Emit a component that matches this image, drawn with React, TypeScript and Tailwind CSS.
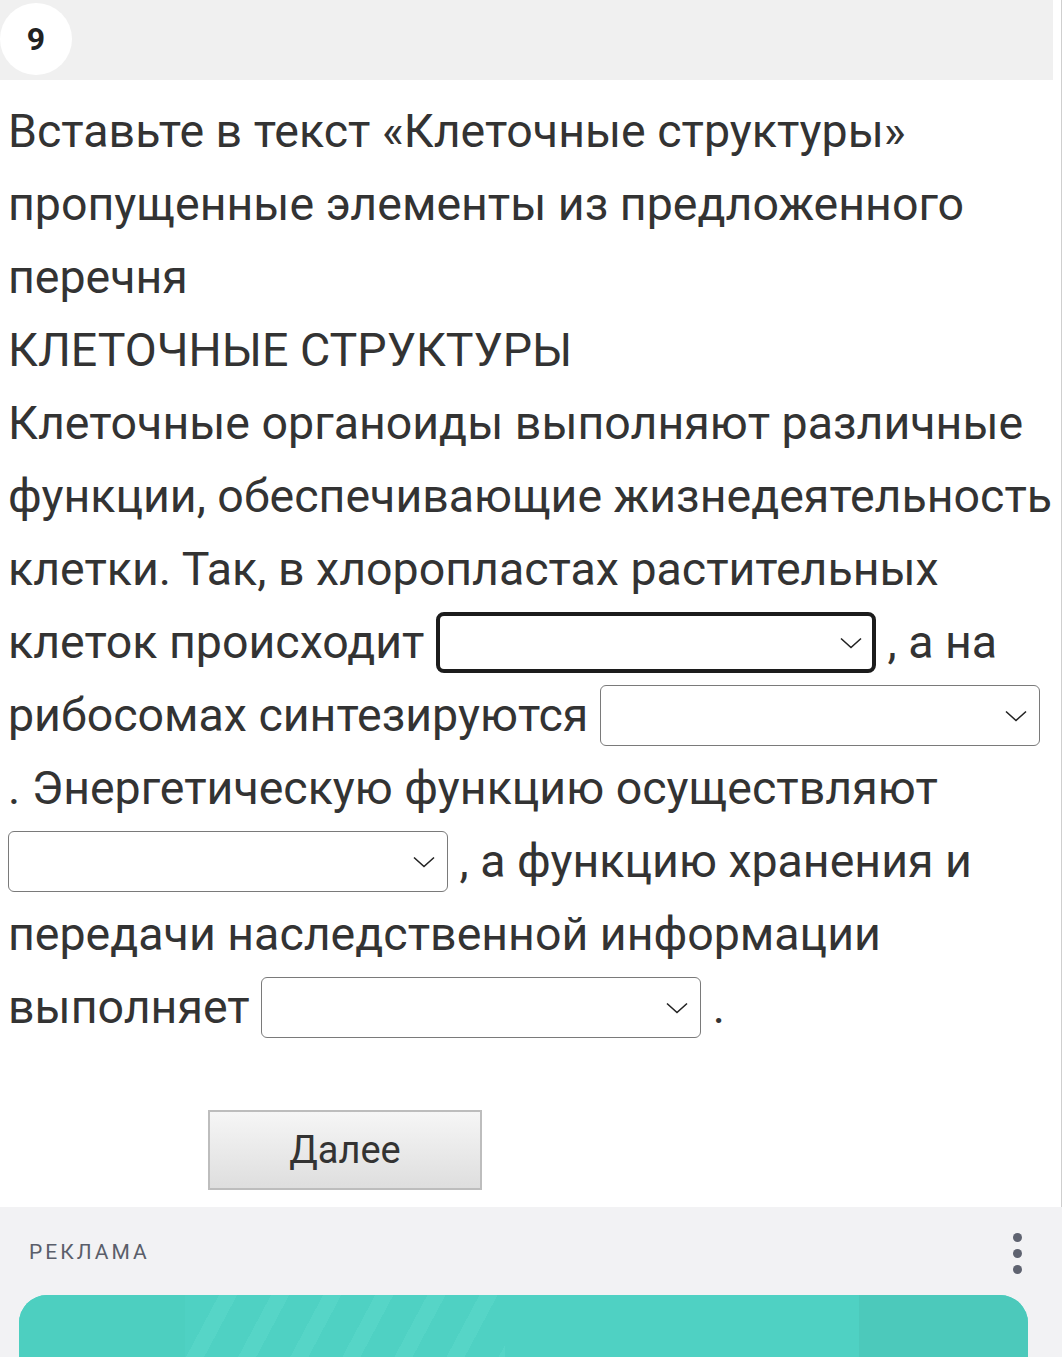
import React from 'react'

// Inline dropdown placeholder used inside the question text
function Blank({ focused = false }: { focused?: boolean }) {
  return (
    <span
      className={`inline-flex items-center justify-end w-[440px] h-[61px] bg-white align-middle ${
        focused ? 'border-[4px] border-[#1c1c1c] rounded-[8px] pr-[10px]' : 'border-[1.5px] border-[#7a7a7a] rounded-[6px] pr-[12px]'
      }`}
    >
      <svg width="22" height="12" viewBox="0 0 22 12" fill="none">
        <path d="M1 1.5 L11 10.5 L21 1.5" stroke="#222" strokeWidth="1.6" />
      </svg>
    </span>
  )
}

function Line({ children }: { children: React.ReactNode }) {
  return <div className="flex items-center h-[73px] whitespace-pre">{children}</div>
}

export default function App() {
  return (
    <div className="w-[1062px] min-h-[1357px] bg-white overflow-hidden font-['Roboto',sans-serif]">
      <div className="border-r border-[#cfcfcf] w-[1062px]">
        {/* task number header */}
        <div className="w-[1053px] h-[80px] bg-[#f0f0f0] relative">
          <div className="absolute left-0 top-[3px] w-[72px] h-[72px] rounded-full bg-white flex items-center justify-center">
            <span className="text-[32px] font-bold text-[#222]">9</span>
          </div>
        </div>

        {/* question text */}
        <div className="pt-[15px] pl-[8px] text-[46.5px] leading-[73px] text-[#333]">
          <Line>Вставьте в текст «Клеточные структуры»</Line>
          <Line>пропущенные элементы из предложенного</Line>
          <Line>перечня</Line>
          <Line>КЛЕТОЧНЫЕ СТРУКТУРЫ</Line>
          <Line>Клеточные органоиды выполняют различные</Line>
          <Line>функции, обеспечивающие жизнедеятельность</Line>
          <Line>клетки. Так, в хлоропластах растительных</Line>
          <Line>
            <span>клеток происходит </span>
            <Blank focused />
            <span> , а на</span>
          </Line>
          <Line>
            <span>рибосомах синтезируются </span>
            <Blank />
          </Line>
          <Line>. Энергетическую функцию осуществляют</Line>
          <Line>
            <Blank />
            <span> , а функцию хранения и</span>
          </Line>
          <Line>передачи наследственной информации</Line>
          <Line>
            <span>выполняет </span>
            <Blank />
            <span> .</span>
          </Line>
        </div>

        <div className="pt-[66px] pb-[17px] pl-[208px]">
          <button className="w-[274px] h-[80px] border-2 border-[#bdbdbd] bg-gradient-to-b from-[#f6f6f6] to-[#dedede] text-[38px] text-[#333] font-['Roboto',sans-serif]">
            Далее
          </button>
        </div>
      </div>

      {/* advertisement block */}
      <div className="bg-[#f2f2f4] pt-[20px] h-[150px]">
        <div className="flex items-center justify-between pl-[29px] pr-[40px] h-[52px]">
          <span className="text-[21px] tracking-[3px] text-[#5a5e6a]">РЕКЛАМА</span>
          <div className="flex flex-col gap-[7px]">
            <span className="w-[9px] h-[9px] rounded-full bg-[#5f6370]" />
            <span className="w-[9px] h-[9px] rounded-full bg-[#5f6370]" />
            <span className="w-[9px] h-[9px] rounded-full bg-[#5f6370]" />
          </div>
        </div>
        <div className="mt-[16px] ml-[19px] w-[1009px] h-[80px] rounded-t-[28px] bg-[#4fd1c3] flex overflow-hidden">
          <div className="w-[166px] bg-[#4dcfc0]" />
          <div className="w-[320px] bg-[repeating-linear-gradient(118deg,#4fd1c3_0px,#4fd1c3_30px,#56d5c7_30px,#56d5c7_46px)]" />
          <div className="flex-1" />
          <div className="w-[169px] bg-[#4cc9bb]" />
        </div>
      </div>
    </div>
  )
}
